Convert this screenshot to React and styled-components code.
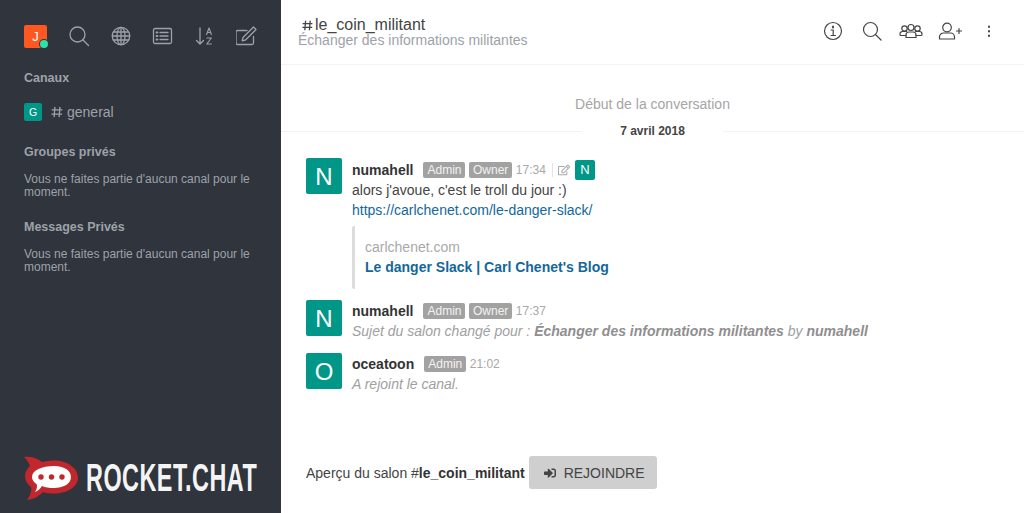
import styled, { createGlobalStyle } from "styled-components";
import { FaRegEdit, FaSignInAlt } from "react-icons/fa";

const Global = createGlobalStyle`
  * { box-sizing: border-box; }
  html, body { margin: 0; height: 100%; overflow: hidden; }
  body { font-family: "Liberation Sans", Arial, sans-serif; background: #fff; }
`;

const Page = styled.div`
  display: flex;
  width: 1024px;
  height: 513px;
`;

const Sidebar = styled.aside`
  width: 281px;
  height: 100%;
  flex-shrink: 0;
  display: flex;
  flex-direction: column;
  padding: 24px 24px 0;
  background: #2f343d;
  color: #9ea2a8;
`;

const Toolbar = styled.div`
  display: flex;
  align-items: center;
  height: 24px;
`;

const Me = styled.div`
  position: relative;
  width: 23px;
  height: 23px;
  flex-shrink: 0;
  margin-right: 21px;
  border-radius: 2px;
  background: #ff5722;
  color: #fff;
  font-size: 13px;
  line-height: 23px;
  text-align: center;
`;

const Status = styled.span`
  position: absolute;
  right: -1px;
  bottom: 0;
  width: 8px;
  height: 8px;
  border-radius: 50%;
  background: #2de0a5;
  box-shadow: 0 0 0 1px #2f343d;
`;

const ToolIcon = styled.svg`
  width: 22px;
  height: 22px;
  margin-right: 20px;
  fill: none;
  stroke: #9ea2a8;
  stroke-width: 1.3;
  stroke-linecap: round;
  stroke-linejoin: round;
  flex-shrink: 0;
`;

const SectionTitle = styled.h3`
  margin: ${(p) => p.$top}px 0 0;
  font-size: 12.5px;
  line-height: 14px;
  font-weight: 700;
  color: #9ea2a8;
`;

const Room = styled.div`
  display: flex;
  align-items: center;
  height: 18px;
  margin-top: 18px;
  font-size: 14px;
`;

const RoomAvatar = styled.div`
  width: 18px;
  height: 18px;
  margin-right: 9px;
  border-radius: 2px;
  background: #009688;
  color: #fff;
  font-size: 10.5px;
  line-height: 18px;
  text-align: center;
`;

const Hash = styled.svg`
  width: 12px;
  height: 12px;
  margin-right: 4px;
  fill: none;
  stroke: #9ea2a8;
  stroke-width: 1.2;
`;

const Empty = styled.p`
  margin: ${(p) => p.$top}px 0 0;
  font-size: 12px;
  line-height: 12.5px;
  color: #9ea2a8;
`;

const Logo = styled.div`
  display: flex;
  align-items: center;
  margin-top: auto;
  margin-bottom: 12px;
  height: 46px;
`;

const LogoMark = styled.svg`
  width: 54px;
  height: 46px;
  flex-shrink: 0;
`;

const LogoText = styled.span`
  display: block;
  width: 171px;
  margin-left: 8px;
  font-size: 39px;
  font-weight: 700;
  line-height: 46px;
  letter-spacing: 0.8px;
  color: #f4f4f4;
  white-space: nowrap;
  transform: scaleX(0.6);
  transform-origin: left center;
`;

const Main = styled.main`
  flex: 1;
  height: 100%;
  display: flex;
  flex-direction: column;
  min-width: 0;
`;

const Header = styled.header`
  display: flex;
  align-items: flex-start;
  height: 65px;
  padding: 16px 23px 0 17px;
  border-bottom: 1px solid #f2f3f3;
`;

const HeaderText = styled.div`
  flex: 1;
`;

const Title = styled.div`
  display: flex;
  align-items: center;
  padding-left: 4px;
  height: 16px;
  margin-top: 1px;
  font-size: 16px;
  color: #444;
`;

const TitleHash = styled(Hash)`
  width: 11px;
  height: 11px;
  margin-right: 2px;
  stroke: #444;
  stroke-width: 1.3;
`;

const Topic = styled.div`
  height: 16px;
  margin-top: -1px;
  font-size: 14px;
  line-height: 16px;
  color: #9ea2a8;
`;

const Actions = styled.div`
  display: flex;
  align-items: center;
  gap: 15px;
  padding-top: 5px;
`;

const ActionIcon = styled.svg`
  width: 24px;
  height: 20px;
  fill: none;
  stroke: #444;
  stroke-width: 1.2;
  stroke-linecap: round;
  stroke-linejoin: round;
`;

const Start = styled.div`
  margin-top: 31px;
  text-align: center;
  font-size: 14px;
  line-height: 16px;
  color: #a5a5a5;
`;

const DateRow = styled.div`
  display: flex;
  align-items: center;
  margin-top: 12px;
  font-size: 12px;
  font-weight: 700;
  line-height: 14px;
  color: #444;
  &::before, &::after {
    content: "";
    flex: 1;
    height: 1px;
    background: #f2f3f3;
  }
`;

const DateText = styled.span`
  padding: 0 38px;
`;

const Messages = styled.div`
  flex: 1;
  display: flex;
  flex-direction: column;
  padding: 20px 24px 0 25px;
`;

const Message = styled.div`
  display: flex;
  margin-bottom: ${(p) => p.$gap}px;
`;

const Avatar = styled.div`
  width: 36px;
  height: 36px;
  flex-shrink: 0;
  margin-right: 10px;
  border-radius: 2px;
  background: #009688;
  color: #fff;
  font-size: 24px;
  line-height: 37px;
  text-align: center;
`;

const Body = styled.div`
  min-width: 0;
  font-size: 14px;
  line-height: 20px;
  color: #444;
`;

const Meta = styled.div`
  display: flex;
  align-items: center;
  height: 21px;
  margin-top: ${(p) => (p.$tall ? 1 : 0)}px;
`;

const Name = styled.span`
  margin-right: 10px;
  font-size: 14px;
  font-weight: 700;
  color: #333;
`;

const Badge = styled.span`
  height: 16px;
  margin-right: 3.5px;
  padding: 0 4px;
  border-radius: 2px;
  background: #a2a2a2;
  color: #f2f2f2;
  font-size: 12px;
  line-height: 16px;
`;

const Time = styled.span`
  font-size: 12px;
  color: #a8a8a8;
`;

const Edited = styled.span`
  display: flex;
  align-items: center;
  margin-left: 6px;
  padding-left: 5px;
  border-left: 1px solid #e4e4e4;
  height: 14px;
  color: #a8a8a8;
  font-size: 12px;
`;

const EditorAvatar = styled.span`
  width: 20px;
  height: 20px;
  margin-left: 5px;
  border-radius: 2px;
  background: #009688;
  color: #fff;
  font-size: 13px;
  line-height: 20px;
  text-align: center;
`;

const Link = styled.a`
  display: block;
  color: #13679a;
  text-decoration: none;
`;

const Preview = styled.div`
  margin: 6px 0 0;
  height: 63px;
  padding: 11px 0 0 10px;
  border-left: 3px solid #dcdcdc;
  border-radius: 2px;
`;

const PreviewHost = styled.div`
  color: #a9a9a9;
`;

const PreviewTitle = styled(Link)`
  font-weight: 700;
`;

const Notice = styled.div`
  font-style: italic;
  color: #a0a0a0;
  b { color: #8f8f8f; }
`;

const Footer = styled.div`
  display: flex;
  align-items: center;
  padding: 0 0 24px 25px;
  font-size: 14px;
  color: #444;
  b { color: #333; }
`;

const JoinButton = styled.button`
  display: flex;
  align-items: center;
  gap: 8px;
  height: 33px;
  margin-left: 4px;
  padding: 0 12px 0 15px;
  border: 0;
  border-radius: 3px;
  background: #cfcfcf;
  color: #444;
  font: 14px "Liberation Sans", sans-serif;
  svg { width: 12px; height: 12px; }
`;

const HashIcon = (
  <path d="M3.6 0.8 2.8 10.2M8.2 0.8 7.4 10.2M0.6 3.6H10.4M0.4 7.4H10.2" />
);

const Tools = () => (
  <>
    <ToolIcon viewBox="0 0 22 22">
      <circle cx="9.5" cy="9.5" r="7.5" />
      <path d="M15 15l5.5 5.5" />
    </ToolIcon>
    <ToolIcon viewBox="0 0 22 22">
      <circle cx="11" cy="11" r="8.7" />
      <ellipse cx="11" cy="11" rx="4" ry="8.7" />
      <path d="M11 2.3v17.4M2.3 11h17.4M3.4 7h15.2M3.4 15h15.2" />
    </ToolIcon>
    <ToolIcon viewBox="0 0 22 22">
      <rect x="1.5" y="3.5" width="18" height="15" rx="1.5" />
      <path d="M8 7.5h8M8 11h8M8 14.5h8" />
      <path d="M4.500 7.500h1M4.500 11h1M4.500 14.500h1" strokeWidth="1.8" />
    </ToolIcon>
    <ToolIcon viewBox="0 0 22 22">
      <path d="M6 3v16M2.5 15.5 6 19l3.5-3.5" />
      <path d="M12.6 9.500 15 3l2.400 6.500M13.500 7.500h3M12.800 13h4.600l-4.600 6h4.600" strokeWidth="1.1" />
    </ToolIcon>
    <ToolIcon viewBox="1 0 22 22">
      <path d="M18.5 11.5v6.5a1.5 1.5 0 0 1-1.5 1.5H2.500A1.500 1.500 0 0 1 1 18V7a1.500 1.500 0 0 1 1.500-1.500H12" />
      <path d="M8 12.5 18.500 2l2.500 2.500-10.500 10.500-3.300 .8z" />
    </ToolIcon>
  </>
);

const RocketMark = () => (
  <LogoMark viewBox="0 0 54 46">
    <path
      d="M0 2C7 1 13 3 18 7C22 6 26 5.500 30 5.500C43 5.500 54 13 54 22.500C54 32 43 38.500 30 38.500C26 38.500 22 38 19 37C15 41 11 44 3 45C6 41 8 36 7 32C3 29 1 25 1 21C1 17 3 14 6 11C5 8 3 5 0 2Z"
      fill="#c1272d"
    />
    <path
      d="M8 22C8 15 18 11 30 11C41 11 47 16 47 22C47 29 39 33 30 33C25 33 21 32.500 18 31C16 34 14 36 11 37C13 34 13.500 31 12.500 29C10 27.500 8 25 8 22Z"
      fill="#fff"
    />
    <circle cx="17" cy="22" r="2.700" fill="#c1272d" />
    <circle cx="27.500" cy="22" r="2.700" fill="#c1272d" />
    <circle cx="38" cy="22" r="2.700" fill="#c1272d" />
  </LogoMark>
);

const App = () => (
  <Page>
    <Global />
    <Sidebar>
      <Toolbar>
        <Me>
          J<Status />
        </Me>
        <Tools />
      </Toolbar>
      <SectionTitle $top={23}>Canaux</SectionTitle>
      <Room>
        <RoomAvatar>G</RoomAvatar>
        <Hash viewBox="0 0 11 11">{HashIcon}</Hash>
        general
      </Room>
      <SectionTitle $top={24}>Groupes privés</SectionTitle>
      <Empty $top={14}>Vous ne faites partie d'aucun canal pour le moment.</Empty>
      <SectionTitle $top={22}>Messages Privés</SectionTitle>
      <Empty $top={14}>Vous ne faites partie d'aucun canal pour le moment.</Empty>
      <Logo>
        <RocketMark />
        <LogoText>ROCKET.CHAT</LogoText>
      </Logo>
    </Sidebar>
    <Main>
      <Header>
        <HeaderText>
          <Title>
            <TitleHash viewBox="0 0 11 11">{HashIcon}</TitleHash>
            le_coin_militant
          </Title>
          <Topic>Échanger des informations militantes</Topic>
        </HeaderText>
        <Actions>
          <ActionIcon viewBox="-2 0 24 20">
            <circle cx="10" cy="10" r="8.500" />
            <path d="M8 9h2.200v5.500M8 14.500h4.500" />
            <path d="M10 5.500v1" strokeWidth="2" />
          </ActionIcon>
          <ActionIcon viewBox="-2 0 24 20">
            <circle cx="8.500" cy="8.500" r="7" />
            <path d="M13.500 13.500l5.500 5.500" />
          </ActionIcon>
          <ActionIcon viewBox="0 0 24 20">
            <circle cx="12" cy="6.500" r="3" />
            <circle cx="5.500" cy="7.500" r="2.700" />
            <circle cx="18.500" cy="7.500" r="2.700" />
            <path d="M7 16.500v-2.500a3 3 0 0 1 3-3h4a3 3 0 0 1 3 3v2.500z" />
            <path d="M7 14.500H2a1 1 0 0 1-1-1v-.5a2.500 2.500 0 0 1 2.500-2.500h4M17 14.500h5a1 1 0 0 0 1-1v-.5a2.500 2.500 0 0 0-2.500-2.500h-4" />
          </ActionIcon>
          <ActionIcon viewBox="0 0 24 20">
            <circle cx="9" cy="6.500" r="4.300" />
            <path d="M1.500 18v-2a4 4 0 0 1 4-4h7a4 4 0 0 1 4 4v2z" />
            <path d="M18.500 10h5M21 7.500v5" />
          </ActionIcon>
          <ActionIcon viewBox="-8 0 24 20">
            <path d="M4 5.500v.5M4 10v.5M4 14.500v.5" strokeWidth="2" />
          </ActionIcon>
        </Actions>
      </Header>
      <Start>Début de la conversation</Start>
      <DateRow>
        <DateText>7 avril 2018</DateText>
      </DateRow>
      <Messages>
        <Message $gap={11}>
          <Avatar>N</Avatar>
          <Body>
            <Meta $tall>
              <Name>numahell</Name>
              <Badge>Admin</Badge>
              <Badge>Owner</Badge>
              <Time>17:34</Time>
              <Edited>
                <FaRegEdit />
              </Edited>
              <EditorAvatar>N</EditorAvatar>
            </Meta>
            alors j'avoue, c'est le troll du jour :)
            <Link>https://carlchenet.com/le-danger-slack/</Link>
            <Preview>
              <PreviewHost>carlchenet.com</PreviewHost>
              <PreviewTitle>Le danger Slack | Carl Chenet's Blog</PreviewTitle>
            </Preview>
          </Body>
        </Message>
        <Message $gap={12}>
          <Avatar>N</Avatar>
          <Body>
            <Meta>
              <Name>numahell</Name>
              <Badge>Admin</Badge>
              <Badge>Owner</Badge>
              <Time>17:37</Time>
            </Meta>
            <Notice>
              Sujet du salon changé pour : <b>Échanger des informations militantes</b> by <b>numahell</b>
            </Notice>
          </Body>
        </Message>
        <Message $gap={0}>
          <Avatar>O</Avatar>
          <Body>
            <Meta>
              <Name>oceatoon</Name>
              <Badge>Admin</Badge>
              <Time>21:02</Time>
            </Meta>
            <Notice>A rejoint le canal.</Notice>
          </Body>
        </Message>
      </Messages>
      <Footer>
        <span>
          Aperçu du salon #<b>le_coin_militant</b>
        </span>
        <JoinButton>
          <FaSignInAlt />
          REJOINDRE
        </JoinButton>
      </Footer>
    </Main>
  </Page>
);

export default App;
